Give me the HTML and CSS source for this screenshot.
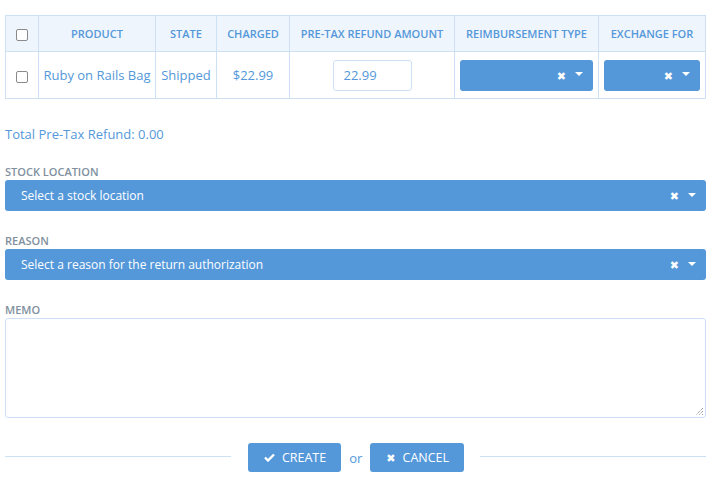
FILE: index.html
```html
<!DOCTYPE html>
<html>
<head>
<meta charset="utf-8">
<link rel="stylesheet" href="styles.css">
</head>
<body>
<div class="page">
  <table class="items">
    <thead>
      <tr>
        <th class="c-check"><span class="cb"></span></th>
        <th class="c-product">Product</th>
        <th class="c-state">State</th>
        <th class="c-charged">Charged</th>
        <th class="c-amount">Pre-Tax Refund Amount</th>
        <th class="c-reimb">Reimbursement Type</th>
        <th class="c-exch">Exchange For</th>
      </tr>
    </thead>
    <tbody>
      <tr>
        <td class="c-check"><span class="cb"></span></td>
        <td>Ruby on Rails Bag</td>
        <td>Shipped</td>
        <td>$22.99</td>
        <td><span class="amount">22.99</span></td>
        <td><div class="select small"><span class="sel-text"></span><span class="sel-x">✖</span><span class="sel-caret"></span></div></td>
        <td><div class="select small"><span class="sel-text"></span><span class="sel-x">✖</span><span class="sel-caret"></span></div></td>
      </tr>
    </tbody>
  </table>

  <p class="total">Total Pre-Tax Refund: 0.00</p>

  <div class="field">
    <div class="label">Stock Location</div>
    <div class="select"><span class="sel-text">Select a stock location</span><span class="sel-x">✖</span><span class="sel-caret"></span></div>
  </div>

  <div class="field">
    <div class="label">Reason</div>
    <div class="select"><span class="sel-text">Select a reason for the return authorization</span><span class="sel-x">✖</span><span class="sel-caret"></span></div>
  </div>

  <div class="field">
    <div class="label">Memo</div>
    <div class="memo"><svg class="grip" width="9" height="9" viewBox="0 0 9 9"><path d="M8 1 L1 8 M8 4 L4 8 M8 7 L7 8" stroke="#777" stroke-width="1" stroke-dasharray="1 1" fill="none"/></svg></div>
  </div>

  <div class="actions">
    <span class="rule"></span>
    <span class="btn"><svg width="11" height="9" viewBox="0 0 11 9"><path d="M1 4.5 L4 7.5 L10 1.5" stroke="#fff" stroke-width="2.4" fill="none"/></svg>CREATE</span>
    <span class="or">or</span>
    <span class="btn"><span class="bx">✖</span>CANCEL</span>
    <span class="rule"></span>
  </div>
</div>
</body>
</html>
```

FILE: styles.css
```css
html, body {
  margin: 0;
  padding: 0;
  background: #fff;
}
body {
  font-family: "Open Sans", "DejaVu Sans", sans-serif;
  color: #5498da;
  font-size: 13px;
}
.page {
  width: 701px;
  padding: 15px 0 0 5px;
}
.items {
  width: 701px;
  border-collapse: collapse;
  table-layout: fixed;
}
.items th, .items td {
  border: 1px solid #cee1f4;
  text-align: center;
  padding: 0;
}
.items th {
  background: #eff5fc;
  height: 35px;
  font-size: 11px;
  font-weight: 600;
  text-transform: uppercase;
  color: #5498da;
}
.items td {
  height: 46px;
  font-size: 13px;
}
.c-check { width: 32px; }
.c-product { width: 116px; }
.c-state { width: 60px; }
.c-charged { width: 72px; }
.c-amount { width: 164px; }
.c-reimb { width: 143px; }
.cb {
  display: inline-block;
  width: 10px;
  height: 10px;
  border: 1px solid #8a8a8a;
  border-radius: 2px;
  background: #fff;
  vertical-align: middle;
}
.amount {
  display: inline-block;
  box-sizing: border-box;
  width: 79px;
  height: 31px;
  border: 1px solid #cee1f4;
  border-radius: 3px;
  text-align: left;
  padding-left: 10px;
  line-height: 29px;
  vertical-align: middle;
}
.select {
  display: flex;
  align-items: center;
  box-sizing: border-box;
  height: 31px;
  background: #5498da;
  border-radius: 3px;
  color: #fff;
  padding: 0 10px 0 16px;
}
.select.small {
  margin: 0 5px 0 5px;
}
.sel-text {
  flex: 1;
  text-align: left;
  font-size: 12px;
  font-weight: 500;
}
.sel-x {
  font-size: 11px;
  font-weight: 700;
  margin-right: 9px;
}
.sel-caret {
  width: 0;
  height: 0;
  border-left: 4px solid transparent;
  border-right: 4px solid transparent;
  border-top: 4px solid #fff;
  margin-top: -2px;
}
.total {
  margin: 27px 0 0 0;
  font-size: 13px;
  line-height: 16px;
}
.field {
  margin-top: 23px;
}
.label {
  font-size: 11px;
  font-weight: 600;
  text-transform: uppercase;
  color: #7f909e;
  line-height: 14px;
  margin-bottom: 1px;
}
.memo {
  position: relative;
  box-sizing: border-box;
  height: 100px;
  border: 1px solid #cee1f4;
  border-radius: 3px;
}
.grip {
  position: absolute;
  right: 1px;
  bottom: 1px;
}
.actions {
  display: flex;
  align-items: center;
  margin-top: 25px;
}
.rule {
  flex: 1;
  height: 1px;
  background: #cee1f4;
  margin-bottom: 3px;
}
.btn {
  display: flex;
  align-items: center;
  gap: 7px;
  background: #5498da;
  color: #fff;
  border-radius: 3px;
  height: 29px;
  padding: 0 15px 0 16px;
  font-size: 12.5px;
  font-weight: 400;
  margin: 0 16px 0 17px;
}
.bx {
  font-size: 11px;
  font-weight: 700;
}
.or {
  font-size: 13px;
  color: #5498da;
  margin: 0 -9px 0 -8px;
}
```
